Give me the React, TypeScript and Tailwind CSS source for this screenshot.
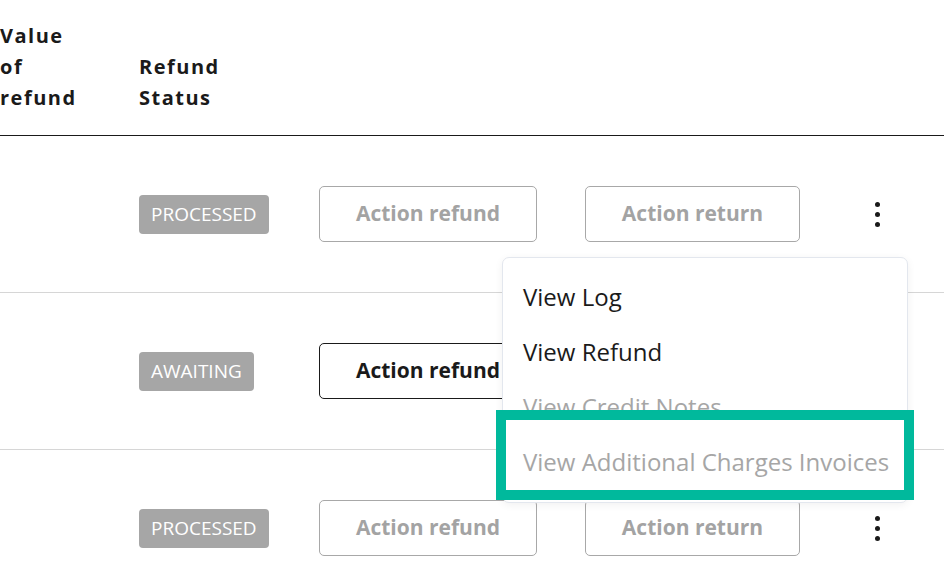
import React from 'react';

type Row = {
    status: 'PROCESSED' | 'AWAITING';
    refundActive: boolean;
    showReturn: boolean;
};

const rows: Row[] = [
    { status: 'PROCESSED', refundActive: false, showReturn: true },
    { status: 'AWAITING', refundActive: true, showReturn: false },
    { status: 'PROCESSED', refundActive: false, showReturn: true },
];

const menuItems = [
    { label: 'View Log', disabled: false },
    { label: 'View Refund', disabled: false },
    { label: 'View Credit Notes', disabled: true },
    { label: 'View Additional Charges Invoices', disabled: true },
];

function Kebab() {
    return (
        <div className="flex flex-col items-center gap-[5px]">
            <span className="w-[5px] h-[5px] rounded-full bg-[#1a1a1a]" />
            <span className="w-[5px] h-[5px] rounded-full bg-[#1a1a1a]" />
            <span className="w-[5px] h-[5px] rounded-full bg-[#1a1a1a]" />
        </div>
    );
}

function ActionButton({ label, active, width }: { label: string; active: boolean; width: string }) {
    return (
        <button
            className={`${width} h-[56px] rounded-[5px] border text-[21px] font-bold bg-white ${
                active ? 'border-[#1a1a1a] text-[#1a1a1a]' : 'border-[#a8a8a8] text-[#a3a3a3]'
            }`}
        >
            {label}
        </button>
    );
}

export default function App() {
    return (
        <div
            className="relative w-[950px] h-[580px] overflow-hidden bg-white text-[#1a1a1a]"
            style={{ fontFamily: '"Open Sans", "Liberation Sans", sans-serif' }}
        >
            <div className="w-[944px]">
                {/* Header */}
                <div className="flex items-end h-[136px] pb-[22px] border-b border-[#1a1a1a] text-[20px] font-bold leading-[31px] tracking-[1.5px]">
                    <div className="w-[139px]">
                        <div className="w-[80px]">Value of refund</div>
                    </div>
                    <div className="w-[90px]">Refund Status</div>
                </div>

                {/* Rows */}
                {rows.map((row, i) => (
                    <div key={i} className="flex items-center h-[157px] border-b border-[#d6d6d6]">
                        <div className="w-[139px]" />
                        <div className="w-[180px]">
                            <span className="inline-flex items-center h-[39px] px-[12px] rounded-[4px] bg-[#a6a6a6] text-white text-[19px]">
                                {row.status}
                            </span>
                        </div>
                        <div className="w-[266px]">
                            <ActionButton label="Action refund" active={row.refundActive} width="w-[218px]" />
                        </div>
                        <div className="w-[265px]">
                            {row.showReturn && (
                                <ActionButton label="Action return" active={false} width="w-[215px]" />
                            )}
                        </div>
                        <div className="w-[55px] flex justify-center">
                            {row.showReturn && <Kebab />}
                        </div>
                    </div>
                ))}
            </div>

            {/* Dropdown menu */}
            <div className="absolute left-[502px] top-[257px] w-[406px] pt-[11px] pb-[13px] bg-white border border-[#e3e7ee] rounded-[7px] shadow-[0_2px_8px_rgba(0,0,0,0.06)]">
                {menuItems.map((item) => (
                    <div
                        key={item.label}
                        className={`h-[55px] flex items-center px-[20px] text-[24px] whitespace-nowrap ${
                            item.disabled ? 'text-[#a6a6a6]' : 'text-[#1a1a1a]'
                        }`}
                    >
                        {item.label}
                    </div>
                ))}
            </div>

            {/* Highlight box */}
            <div className="absolute left-[496px] top-[410px] w-[418px] h-[90px] border-[10px] border-[#00b99c]" />
        </div>
    );
}
